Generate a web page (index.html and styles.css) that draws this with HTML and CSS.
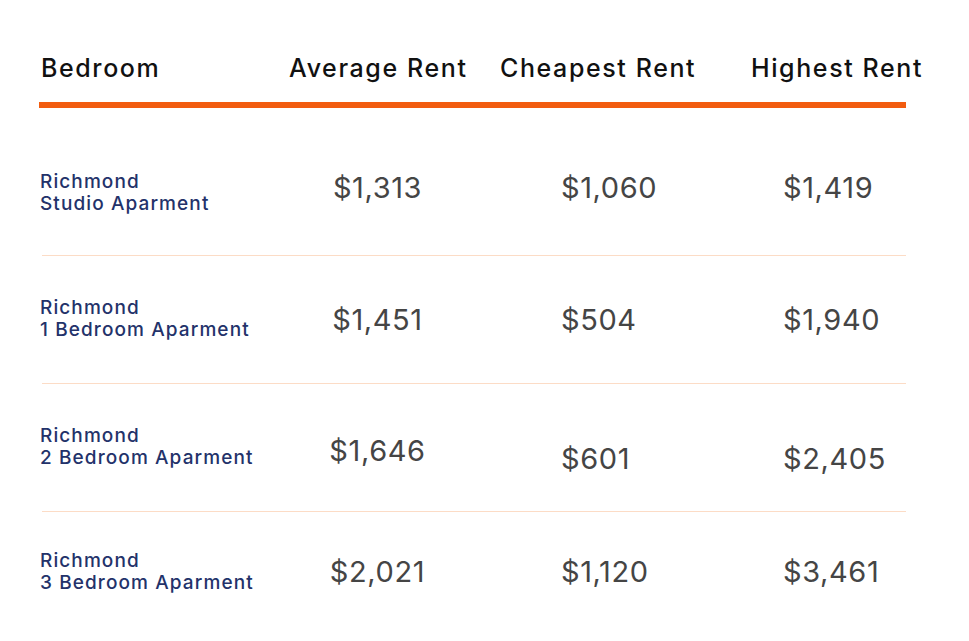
FILE: index.html
```html
<!DOCTYPE html>
<html lang="en">
<head>
<meta charset="utf-8">
<title>Richmond Rent</title>
<link rel="stylesheet" href="styles.css">
</head>
<body>
<main class="table">
  <div class="head">
    <div class="h h-bed">Bedroom</div>
    <div class="h h-avg">Average Rent</div>
    <div class="h h-min">Cheapest Rent</div>
    <div class="h h-max">Highest Rent</div>
  </div>
  <div class="row row-first">
    <div class="label">Richmond<br>Studio Aparment</div>
    <div class="num avg up6">$1,313</div>
    <div class="num min up6">$1,060</div>
    <div class="num max up6">$1,419</div>
  </div>
  <div class="row">
    <div class="label">Richmond<br>1 Bedroom Aparment</div>
    <div class="num avg">$1,451</div>
    <div class="num min">$504</div>
    <div class="num max">$1,940</div>
  </div>
  <div class="row">
    <div class="label">Richmond<br>2 Bedroom Aparment</div>
    <div class="num avg down3">$1,646</div>
    <div class="num min down11">$601</div>
    <div class="num max down11">$2,405</div>
  </div>
  <div class="row row-last">
    <div class="label">Richmond<br>3 Bedroom Aparment</div>
    <div class="num avg">$2,021</div>
    <div class="num min">$1,120</div>
    <div class="num max">$3,461</div>
  </div>
</main>
</body>
</html>
```
FILE: styles.css
```css
* { box-sizing: border-box; }
html, body { margin: 0; padding: 0; background: #fff; }
body { font-family: Inter, "Open Sans", sans-serif; }

.table {
  width: 969px;
  padding: 0 0 0 39px;
}

.head {
  display: grid;
  grid-template-columns: 250px 211px 251px 200px;
  height: 108px;
  padding-top: 52px;
  width: 867px;
  border-bottom: 6px solid #f25c0f;
}
.h {
  font-size: 25px;
  line-height: 32px;
  color: #111;
  font-weight: 500;
  letter-spacing: 1.6px;
  white-space: nowrap;
}
.h-bed { padding-left: 2px; }

.row {
  display: grid;
  grid-template-columns: 247px 211px 251px 155px;
  align-items: center;
  height: 128px;
  width: 864px;
  margin-left: 3px;
  border-bottom: 1px solid #fcdcc6;
}
.row-first { height: 148px; padding-top: 24px; }
.row-last { height: 120px; border-bottom: none; }

.label {
  font-size: 19px;
  line-height: 22px;
  color: #23326a;
  font-weight: 500;
  letter-spacing: 1.1px;
  white-space: nowrap;
  margin-top: -1px;
  margin-left: -2px;
}

.num {
  font-size: 29px;
  line-height: 34px;
  color: #454545;
  letter-spacing: 0.6px;
  white-space: nowrap;
}
.avg { text-align: center; padding-right: 34px; }
.min { padding-left: 61px; }
.max { padding-left: 32px; }

.up6 { margin-top: -12px; }
.down3 { margin-top: 6px; }
.down11 { margin-top: 22px; }
```
